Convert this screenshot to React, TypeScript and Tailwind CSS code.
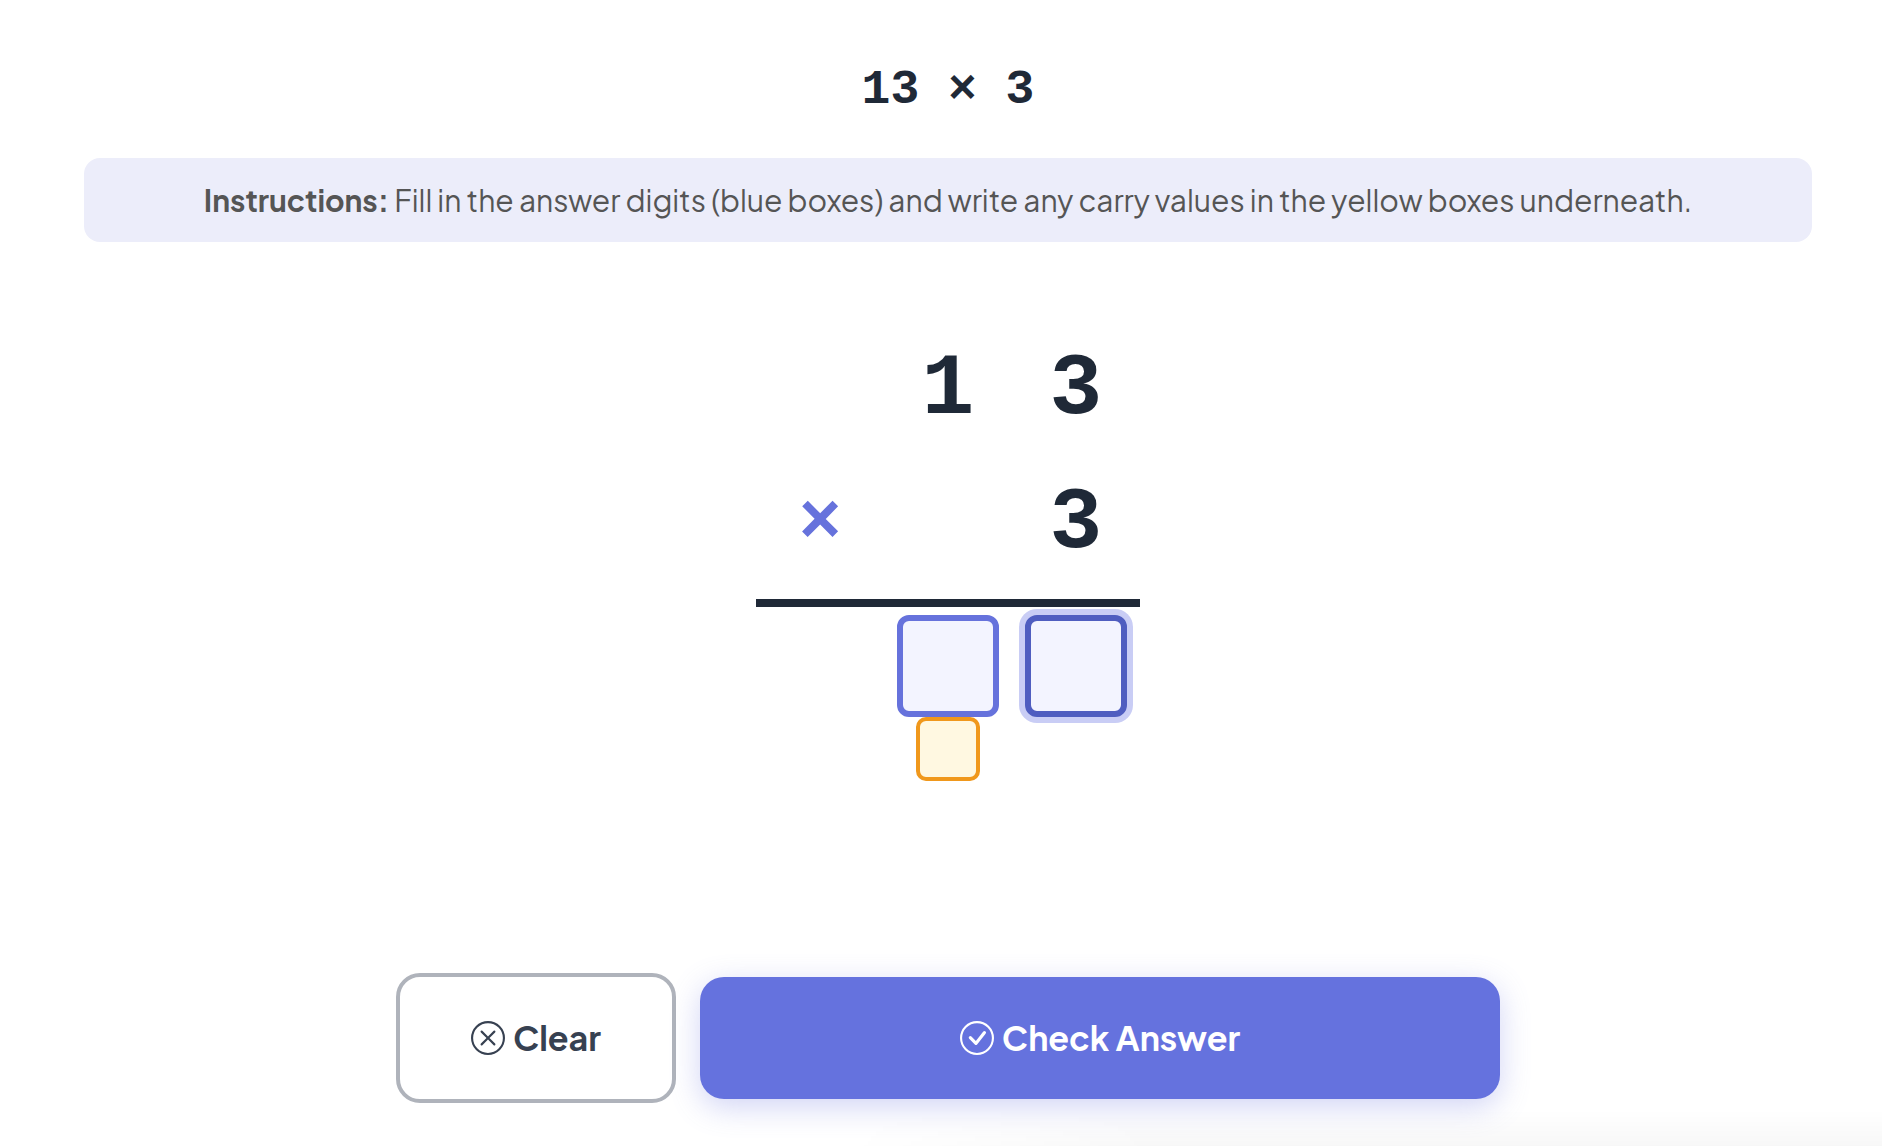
import { useState } from "react";
import { BsCheckCircle, BsXCircle } from "react-icons/bs";

const top = [1, 3];
const bottom = 3;

const digit = "flex h-[134px] items-center justify-center";
const answerBox =
  "h-[102px] w-[102px] rounded-xl border-6 border-[#6672dc] bg-[#f3f4ff] text-center text-6xl font-bold text-[#1f2937] " +
  "focus:border-[#4f5dc0] focus:outline-none focus:ring-6 focus:ring-[#c9cdf5]";
const carryBox =
  "h-16 w-16 rounded-[10px] border-4 border-[#f0981c] bg-[#fff8e1] text-center text-3xl font-bold text-[#1f2937] focus:outline-none";

export default function App() {
  const [answer, setAnswer] = useState(["", ""]);
  const [carry, setCarry] = useState("");

  const setDigit = (i: number, value: string) => setAnswer(answer.map((d, j) => (j === i ? value : d)));

  const clear = () => {
    setAnswer(["", ""]);
    setCarry("");
  };

  return (
    <main className="flex min-h-screen flex-col bg-white pl-[84px] pr-[70px] font-['Plus_Jakarta_Sans','Inter',sans-serif]">
      <h1 className="pt-[54px] text-center font-['Liberation_Mono',monospace] text-5xl leading-[72px] font-bold text-[#1f2937]">
        {top.join("")} × {bottom}
      </h1>

      <p className="mt-8 rounded-2xl bg-[#ecedfa] px-6 py-5 text-center text-[30px] leading-11 text-[#555]">
        <strong>Instructions:</strong> Fill in the answer digits (blue boxes) and write any carry values in the yellow boxes
        underneath.
      </p>

      <div className="mt-[81px] self-center font-['Liberation_Mono',monospace]">
        <div className="grid grid-cols-[repeat(3,128px)] pb-2 text-[88px] leading-none font-bold text-[#1f2937]">
          <span className={digit} />
          <span className={digit}>{top[0]}</span>
          <span className={digit}>{top[1]}</span>
          <span className={digit + " text-7xl text-[#6672dc]"}>×</span>
          <span className={digit} />
          <span className={digit}>{bottom}</span>
        </div>

        <div className="grid grid-cols-[repeat(3,128px)] justify-items-center border-t-8 border-[#1f2937] pt-2">
          <input
            className={answerBox + " col-start-2"}
            aria-label="Tens digit"
            inputMode="numeric"
            maxLength={1}
            value={answer[0]}
            onChange={(e) => setDigit(0, e.target.value)}
          />
          <input
            className={answerBox}
            aria-label="Ones digit"
            inputMode="numeric"
            maxLength={1}
            autoFocus
            value={answer[1]}
            onChange={(e) => setDigit(1, e.target.value)}
          />
          <input
            className={carryBox + " col-start-2"}
            aria-label="Carry into tens"
            inputMode="numeric"
            maxLength={1}
            value={carry}
            onChange={(e) => setCarry(e.target.value)}
          />
        </div>
      </div>

      <div className="mx-auto mt-48 flex w-full max-w-[1104px] items-center gap-6 text-[34px] leading-[58px] font-bold">
        <button
          type="button"
          onClick={clear}
          className="flex w-[280px] items-center justify-center gap-2 rounded-3xl border-4 border-[#afb3bb] bg-white py-8 text-[#374151]"
        >
          <BsXCircle className="h-[34px] w-[34px]" />
          Clear
        </button>
        <button
          type="button"
          className="flex flex-1 items-center justify-center gap-2 rounded-3xl bg-[#6572de] py-8 text-white shadow-[0_8px_30px_rgba(102,114,222,0.3)]"
        >
          <BsCheckCircle className="h-[34px] w-[34px]" />
          Check Answer
        </button>
      </div>

      {/* soft shade along the bottom edge */}
      <div className="mt-auto -mr-[70px] h-9 w-3/5 self-end bg-linear-to-b from-transparent to-black/3 [mask-image:linear-gradient(to_right,transparent,black_30%)]" />
    </main>
  );
}
